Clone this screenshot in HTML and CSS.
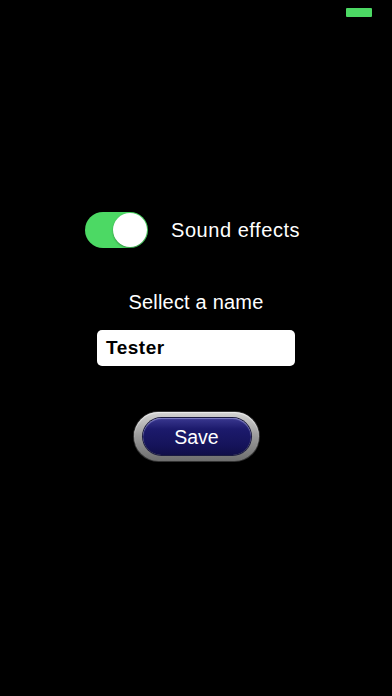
FILE: index.html
```html
<!DOCTYPE html>
<html>
<head>
<meta charset="utf-8">
<link rel="stylesheet" href="styles.css">
</head>
<body>
<div class="status">
  <div class="battery"></div>
</div>
<div class="main">
  <div class="toggle-row">
    <div class="switch"><div class="knob"></div></div>
    <span class="toggle-label">Sound effects</span>
  </div>
  <div class="prompt">Sellect a name</div>
  <div class="field">Tester</div>
  <div class="save-ring">
    <div class="save-btn">Save</div>
  </div>
</div>
</body>
</html>
```
FILE: styles.css
```css
html, body {
  margin: 0;
  padding: 0;
  background: #000;
  width: 392px;
  height: 696px;
  overflow: hidden;
  font-family: "Liberation Sans", Arial, sans-serif;
  color: #fff;
}
.status {
  height: 26px;
  box-sizing: border-box;
  padding-top: 8px;
  padding-right: 20px;
  display: flex;
  justify-content: flex-end;
}
.battery {
  width: 26px;
  height: 9px;
  background: #4cd964;
  border-radius: 1px;
}
.main {
  display: flex;
  flex-direction: column;
  align-items: center;
  padding-top: 186px;
}
.toggle-row {
  display: flex;
  align-items: center;
  gap: 23px;
  align-self: flex-start;
  margin-left: 85px;
}
.switch {
  width: 63px;
  height: 36px;
  border-radius: 18px;
  background: #4cd964;
  display: flex;
  align-items: center;
  justify-content: flex-end;
  padding-right: 1px;
  box-sizing: border-box;
}
.knob {
  width: 34px;
  height: 34px;
  border-radius: 50%;
  background: #fff;
  box-shadow: 0 1px 2px rgba(0,0,0,0.35);
}
.toggle-label {
  font-size: 20px;
  line-height: 24px;
  letter-spacing: 0.55px;
}
.prompt {
  margin-top: 42px;
  font-size: 20px;
  line-height: 24px;
  letter-spacing: 0.2px;
}
.field {
  margin-top: 16px;
  width: 198px;
  height: 36px;
  box-sizing: border-box;
  background: #fff;
  border-radius: 5px;
  color: #000;
  font-weight: bold;
  font-size: 19px;
  line-height: 36px;
  padding-left: 9px;
  letter-spacing: 0.5px;
}
.save-ring {
  margin-top: 46px;
  width: 125px;
  height: 49px;
  box-sizing: border-box;
  border-radius: 25px;
  padding: 6px 8px 6px 9px;
  background: linear-gradient(#d4d4d4, #9a9a9a 50%, #6e6e6e);
  box-shadow: 0 0 0 1px #333, inset 0 1px 1px #eee;
}
.save-btn {
  height: 37px;
  border-radius: 19px;
  background: linear-gradient(#3a3890 0%, #1c1a6c 30%, #15135a 75%, #100e48 100%);
  box-shadow: 0 0 0 1px #1a1a40, inset 0 1px 1px rgba(200,200,255,0.5);
  display: flex;
  align-items: center;
  justify-content: center;
  font-size: 19.5px;
  color: #fff;
  padding-top: 1px;
  box-sizing: border-box;
}
```
